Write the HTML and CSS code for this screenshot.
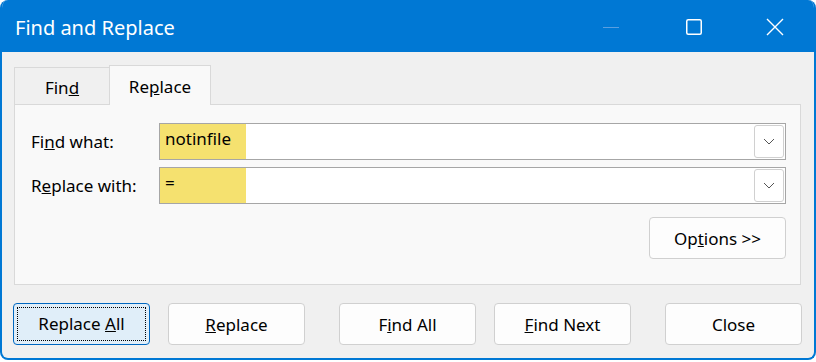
FILE: index.html
```html
<!DOCTYPE html>
<html lang="en">
<head>
  <meta charset="UTF-8">
  <title>Find and Replace</title>
  <link rel="stylesheet" href="styles.css">
</head>
<body>
  <div class="window">
    <div class="titlebar">
      <span class="title">Find and Replace</span>
      <div class="controls">
        <span class="ctl min"><svg width="16" height="16" viewBox="0 0 16 16"><line x1="0" y1="8.5" x2="16" y2="8.5" stroke="#5a9fe0" stroke-width="1"/></svg></span>
        <span class="ctl max"><svg width="16" height="16" viewBox="0 0 16 16"><rect x="0.75" y="0.75" width="14.5" height="14.5" rx="1.5" fill="none" stroke="#fff" stroke-width="1.5"/></svg></span>
        <span class="ctl close"><svg width="18" height="18" viewBox="0 0 18 18"><path d="M1 1 L17 17 M17 1 L1 17" stroke="#fff" stroke-width="1.4"/></svg></span>
      </div>
    </div>
    <div class="content">
      <div class="tabs">
        <div class="tab">Fin<u>d</u></div>
        <div class="tab active">Re<u>p</u>lace</div>
      </div>
      <div class="panel">
        <div class="row">
          <label class="label">Fi<u>n</u>d what:</label>
          <div class="combo">
            <span class="value">notinfile</span>
            <span class="drop"><svg width="12" height="7" viewBox="0 0 12 7"><path d="M1 1 L6 6 L11 1" fill="none" stroke="#555" stroke-width="1"/></svg></span>
          </div>
        </div>
        <div class="row">
          <label class="label">R<u>e</u>place with:</label>
          <div class="combo">
            <span class="value">=</span>
            <span class="drop"><svg width="12" height="7" viewBox="0 0 12 7"><path d="M1 1 L6 6 L11 1" fill="none" stroke="#555" stroke-width="1"/></svg></span>
          </div>
        </div>
        <div class="options-row">
          <button class="btn">Op<u>t</u>ions &gt;&gt;</button>
        </div>
      </div>
      <div class="actions">
        <div class="group">
          <button class="btn focused"><span class="focus-ring">Replace <u>A</u>ll</span></button>
          <button class="btn"><u>R</u>eplace</button>
        </div>
        <div class="group">
          <button class="btn">F<u>i</u>nd All</button>
          <button class="btn"><u>F</u>ind Next</button>
        </div>
        <button class="btn">Close</button>
      </div>
    </div>
  </div>
</body>
</html>
```

FILE: styles.css
```css
body {
  margin: 0;
  background: #fff;
  font-family: "Noto Sans", "Open Sans", sans-serif;
  color: #000;
}

.window {
  width: 816px;
  height: 360px;
  box-sizing: border-box;
  border: 2px solid #0078d4;
  border-top: 0;
  border-radius: 8px;
  background: #f0f0f0;
  overflow: hidden;
  display: flex;
  flex-direction: column;
}

.titlebar {
  height: 52px;
  flex: none;
  background: #0078d4;
  display: flex;
  align-items: center;
  padding-left: 13px;
}

.title {
  color: #fff;
  font-size: 20px;
  padding-top: 2px;
}

.controls {
  margin-left: auto;
  display: flex;
  align-items: center;
  padding-top: 2px;
}

.ctl {
  display: flex;
  align-items: center;
  justify-content: center;
}

.ctl.min { width: 16px; margin-right: 67px; }
.ctl.max { width: 16px; margin-right: 64px; }
.ctl.close { width: 18px; margin-right: 30px; }

.content {
  flex: 1;
  padding: 13px 12px 0 12px;
}

.tabs {
  display: flex;
  align-items: flex-end;
  height: 39px;
}

.tab {
  box-sizing: border-box;
  height: 37px;
  width: 96px;
  border: 1px solid #d9d9d9;
  border-bottom: 0;
  background: #f0f0f0;
  font-size: 17px;
  text-align: center;
  line-height: 40px;
}

.tab.active {
  height: 40px;
  width: 102px;
  margin-left: -1px;
  margin-bottom: -1px;
  background: #f9f9f9;
  position: relative;
  line-height: 42px;
}

.panel {
  box-sizing: border-box;
  height: 181px;
  width: 787px;
  border: 1px solid #d9d9d9;
  background: #f9f9f9;
  padding: 18px 14px 0 16px;
}

.row {
  display: flex;
  align-items: center;
  margin-bottom: 7px;
}

.label {
  width: 128px;
  font-size: 17px;
}

.combo {
  flex: 1;
  box-sizing: border-box;
  height: 37px;
  border: 1px solid #a6a6a6;
  background: #fff;
  display: flex;
  align-items: stretch;
  padding: 1px 1px 1px 0;
}

.value {
  width: 86px;
  background: #f5e16f;
  font-size: 17px;
  padding-left: 5px;
  box-sizing: border-box;
  margin-top: -1px;
  margin-bottom: -1px;
  line-height: 30px;
}

.drop {
  margin-left: auto;
  width: 30px;
  box-sizing: border-box;
  border: 1px solid #d0d0d0;
  border-radius: 3px;
  display: flex;
  align-items: center;
  justify-content: center;
}

.options-row {
  display: flex;
  justify-content: flex-end;
  margin-top: 13px;
}

.btn {
  box-sizing: border-box;
  width: 137px;
  height: 42px;
  border: 1px solid #d0d0d0;
  border-radius: 4px;
  background: #fdfdfd;
  font-family: inherit;
  font-size: 17px;
  color: #000;
  padding: 0;
}

.actions {
  display: flex;
  justify-content: space-between;
  margin-top: 18px;
  margin-left: -1px;
}

.group {
  display: flex;
  gap: 18px;
}

.btn.focused {
  background: #e0eef9;
  border-color: #0067c0;
  padding: 3px;
}

.focus-ring {
  display: block;
  height: 100%;
  line-height: 32px;
  text-align: center;
  border: 1px dotted #000;
  box-sizing: border-box;
}
```
